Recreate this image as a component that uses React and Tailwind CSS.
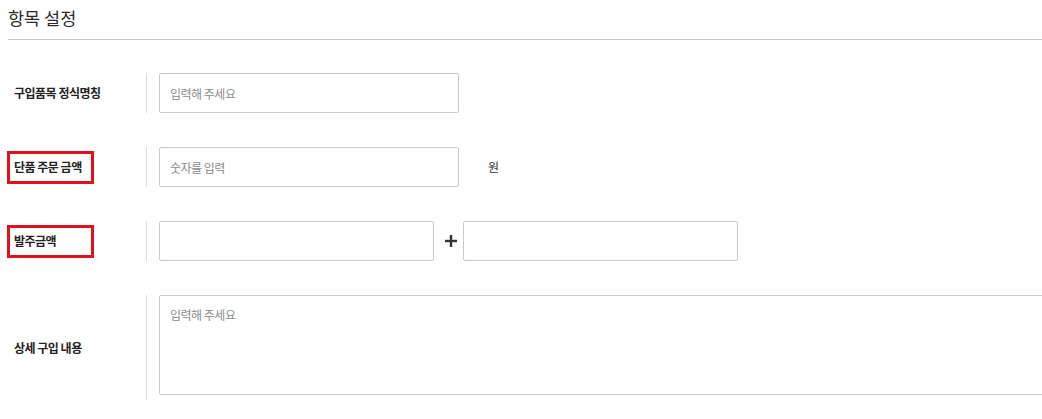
const font = { fontFamily: '"Noto Sans CJK KR", "Noto Sans", sans-serif' };

function Label({ children, marked }) {
  if (marked) {
    return (
      <div className="flex h-full w-[146px] shrink-0 items-center pl-[7px]">
        <span className="flex h-[33px] w-[87px] items-center border-[3px] border-[#e0121c] pl-[4px] text-[12px] font-bold tracking-[-0.5px] text-[#222]">
          {children}
        </span>
      </div>
    );
  }
  return (
    <div className="flex h-full w-[146px] shrink-0 items-center pl-[14px] text-[12px] font-bold tracking-[-0.5px] text-[#222]">
      {children}
    </div>
  );
}

function Field({ placeholder = '', className = 'w-[300px]' }) {
  return (
    <input
      type="text"
      placeholder={placeholder}
      className={`h-[40px] rounded-[2px] border border-[#c9c9c9] bg-white px-[10px] text-[12px] tracking-[-0.5px] text-[#333] placeholder:text-[#8c8c8c] focus:outline-none ${className}`}
    />
  );
}

function Row({ label, marked, height = 'h-[40px]', children }) {
  return (
    <div className={`flex ${height}`}>
      <Label marked={marked}>{label}</Label>
      <div className="h-full w-px shrink-0 bg-[#dcdcdc]" />
      <div className="flex h-full items-center pl-[12px]">{children}</div>
    </div>
  );
}

export default function App() {
  return (
    <div className="w-full overflow-hidden bg-white" style={font}>
      <div className="ml-2 flex h-[40px] items-center border-b border-[#c4c4c4] pb-[3px]">
        <h2 className="text-[17.5px] font-normal text-[#2b2b2b]">항목 설정</h2>
      </div>

      <div className="mt-[33px] flex flex-col gap-[34px]">
        <Row label="구입품목 정식명칭">
          <Field placeholder="입력해 주세요" />
        </Row>

        <Row label="단품 주문 금액" marked>
          <Field placeholder="숫자를 입력" />
          <span className="ml-[29px] text-[12px] text-[#333]">원</span>
        </Row>

        <Row label="발주금액" marked>
          <Field className="w-[275px]" />
          <svg viewBox="0 0 12 12" className="ml-[11px] mr-[6px] h-[12px] w-[12px] text-[#333]">
            <rect x="4.8" y="0" width="2.4" height="12" fill="currentColor" />
            <rect x="0" y="4.8" width="12" height="2.4" fill="currentColor" />
          </svg>
          <Field className="w-[275px]" />
        </Row>

        <Row label="상세 구입 내용" height="h-[105px]">
          <textarea
            placeholder="입력해 주세요"
            className="w-[900px] resize-none self-start rounded-[2px] border border-[#c9c9c9] bg-white px-[10px] pt-[10px] text-[12px] tracking-[-0.5px] text-[#333] placeholder:text-[#8c8c8c] focus:outline-none"
            style={{ height: 100 }}
          />
        </Row>
      </div>
    </div>
  );
}
